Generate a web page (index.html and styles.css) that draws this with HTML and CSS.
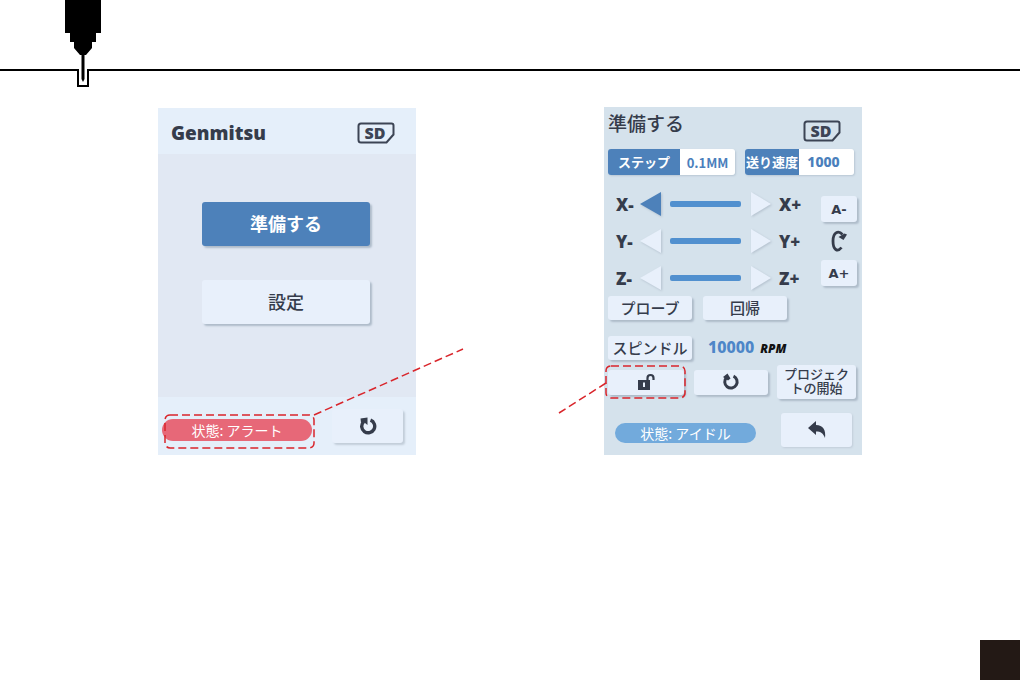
FILE: index.html
```html
<!DOCTYPE html>
<html lang="ja">
<head>
<meta charset="utf-8">
<title>Genmitsu</title>
<link rel="stylesheet" href="styles.css">
</head>
<body>
<header class="banner">
  <span class="rule rule-start"></span>
  <svg class="tool" viewBox="0 0 36 90" aria-hidden="true">
    <path d="M0 0H36V33H31V42H27V48L21 55H15L9 48V42H5V33H0Z"/>
    <path d="M16.500 54H19.500V79L18 82L16.500 79Z"/>
    <path d="M0 70H13V86H23V70H36" fill="none" stroke="#000" stroke-width="2"/>
  </svg>
  <span class="rule"></span>
</header>

<main class="screens">
  <section class="panel home">
    <div class="home-head">
      <h1 class="brand">Genmitsu</h1>
      <svg class="sd" viewBox="0 0 38 22" role="img" aria-label="SD">
        <path d="M4 1.500H34.500Q36.500 1.500 36.500 3.500V12.500L29.500 20.500H4Q1.500 20.500 1.500 18V4Q1.500 1.500 4 1.500Z" fill="none" stroke="currentColor" stroke-width="2"/>
        <text x="18" y="17" text-anchor="middle" class="sd-text">SD</text>
      </svg>
    </div>
    <div class="home-body">
      <button class="btn big primary">準備する</button>
      <button class="btn big">設定</button>
    </div>
    <div class="home-foot">
      <div class="callout">
        <span class="status alert">状態: アラート</span>
        <svg class="mark mark-alert" viewBox="0 0 150 34" aria-hidden="true">
          <rect x="0" y="0" width="149" height="33" rx="5"/>
          <path d="M149 0L298 -66"/>
        </svg>
      </div>
      <button class="btn tile" aria-label="リロード">
        <svg class="icon" viewBox="0 0 18 18" aria-hidden="true">
          <path d="M11.500 3.200A6.500 6.500 0 1 1 4.500 4.800" fill="none" stroke="currentColor" stroke-width="3.400"/>
          <path d="M1.500 1.500L8.500 .5V8L6 6L2 5.500Z" fill="currentColor"/>
        </svg>
      </button>
    </div>
  </section>

  <section class="panel control">
    <div class="control-head">
      <h2 class="title">準備する</h2>
      <svg class="sd" viewBox="0 0 38 22" role="img" aria-label="SD">
        <path d="M4 1.500H34.500Q36.500 1.500 36.500 3.500V12.500L29.500 20.500H4Q1.500 20.500 1.500 18V4Q1.500 1.500 4 1.500Z" fill="none" stroke="currentColor" stroke-width="2"/>
        <text x="18" y="17" text-anchor="middle" class="sd-text">SD</text>
      </svg>
    </div>
    <div class="fields">
      <div class="field step"><label for="step">ステップ</label><input id="step" value="0.1MM"></div>
      <div class="field feed"><label for="feed">送り速度</label><input id="feed" value="1000"></div>
    </div>
    <div class="jog">
      <div class="axes">
        <div class="axis">
          <span>X-</span>
          <button class="arrow active" aria-label="X-"><svg viewBox="0 0 22 26"><path d="M0 13L21 1V25Z"/></svg></button>
          <i class="bar"></i>
          <button class="arrow" aria-label="X+"><svg viewBox="0 0 22 26"><path d="M1 1L21 13L1 25Z"/></svg></button>
          <span>X+</span>
        </div>
        <div class="axis">
          <span>Y-</span>
          <button class="arrow" aria-label="Y-"><svg viewBox="0 0 22 26"><path d="M0 13L21 1V25Z"/></svg></button>
          <i class="bar"></i>
          <button class="arrow" aria-label="Y+"><svg viewBox="0 0 22 26"><path d="M1 1L21 13L1 25Z"/></svg></button>
          <span>Y+</span>
        </div>
        <div class="axis">
          <span>Z-</span>
          <button class="arrow" aria-label="Z-"><svg viewBox="0 0 22 26"><path d="M0 13L21 1V25Z"/></svg></button>
          <i class="bar"></i>
          <button class="arrow" aria-label="Z+"><svg viewBox="0 0 22 26"><path d="M1 1L21 13L1 25Z"/></svg></button>
          <span>Z+</span>
        </div>
      </div>
      <div class="rotary">
        <button class="btn small">A-</button>
        <svg class="turn" viewBox="0 0 18 22" aria-hidden="true">
          <path d="M12.500 4.500C8 -.5 3 3 3 11C3 20 7.500 22.500 11.500 17.500" fill="none" stroke="currentColor" stroke-width="2.800"/>
          <path d="M8.500 7L14.500 3.500L17 4.500L13.500 10Z" fill="currentColor"/>
        </svg>
        <button class="btn small">A+</button>
      </div>
    </div>
    <div class="row">
      <button class="btn mid">プローブ</button>
      <button class="btn mid">回帰</button>
    </div>
    <div class="row spindle">
      <button class="btn mid">スピンドル</button>
      <p class="speed"><output>10000</output> <span>RPM</span></p>
    </div>
    <div class="actions">
      <div class="callout">
        <button class="btn lock" aria-label="ロック解除">
          <svg class="icon" viewBox="0 0 18 18" aria-hidden="true">
            <path d="M1 7H13V17H1Z" fill="currentColor"/>
            <path d="M10.500 8V5Q10.500 2 13.500 2T16.500 5V7" fill="none" stroke="currentColor" stroke-width="2.200"/>
            <path d="M6 9.500H8V14H6Z" fill="#e7effb"/>
          </svg>
        </button>
        <svg class="mark mark-lock" viewBox="0 0 80 34" aria-hidden="true">
          <rect x="0" y="0" width="79" height="32" rx="5"/>
          <path d="M0 17L-47 47"/>
        </svg>
      </div>
      <button class="btn again" aria-label="リロード">
        <svg class="icon" viewBox="0 0 18 18" aria-hidden="true">
          <path d="M11.500 3.200A6.200 6.200 0 1 1 4.500 4.500" fill="none" stroke="currentColor" stroke-width="3"/>
          <path d="M1 4L5.500 .5L8.500 5.500L6 7.500Z" fill="currentColor"/>
        </svg>
      </button>
      <button class="btn project">プロジェク<br>トの開始</button>
    </div>
    <div class="control-foot">
      <span class="status idle">状態: アイドル</span>
      <button class="btn tile" aria-label="戻る">
        <svg class="icon back" viewBox="0 0 20 18" aria-hidden="true"><path d="M1 7L9 0V4C16 4 19 9 18 17C16 12 14 10.500 9 10.500V14Z" fill="currentColor"/></svg>
      </button>
    </div>
  </section>
</main>
<footer class="page-foot"><span class="page-tab"></span></footer>
</body>
</html>
```
FILE: styles.css
```css
* { box-sizing: border-box; }
body {
  margin: 0;
  min-height: 100vh;
  display: flex;
  flex-direction: column;
  background: #fff;
  color: #353c4b;
  font-family: "Noto Sans CJK JP", sans-serif;
}
h1, h2, p { margin: 0; }
button { border: 0; padding: 0; font: inherit; color: inherit; }

.banner { display: flex; height: 90px; }
.rule { flex: 1; height: 71px; border-bottom: 2px solid #000; }
.rule-start { flex: none; width: 65px; }
.tool { width: 36px; height: 90px; }

.screens {
  flex: 1;
  display: flex;
  justify-content: center;
  align-items: flex-start;
  gap: 188px;
  padding-top: 17px;
}
.panel { width: 258px; }
.sd { width: 38px; height: 22px; color: #3c4454; }
.sd-text { font: 800 16px "Open Sans", sans-serif; fill: currentColor; }

.btn {
  display: flex;
  align-items: center;
  justify-content: center;
  border-radius: 3px;
  background: #e8f0fb;
  box-shadow: 2px 2px 2px #aebbc9;
  font-weight: 500;
}
.icon { width: 18px; height: 18px; }
.tile { width: 71px; height: 34px; }
.status {
  display: flex;
  align-items: center;
  justify-content: center;
  border-radius: 11px;
  color: #fff;
  font-size: 14px;
  line-height: 20px;
}

.home { margin-top: 1px; background: #e1e8f3; }
.home-head {
  display: flex;
  align-items: center;
  justify-content: space-between;
  height: 46px;
  padding: 4px 21px 0 13px;
  background: #e5effa;
}
.brand { font: 800 19px/24px "Open Sans", sans-serif; }
.home-body {
  display: flex;
  flex-direction: column;
  align-items: center;
  gap: 34px;
  height: 243px;
  padding: 48px 2px 0 0;
}
.big { width: 168px; height: 44px; padding-bottom: 3px; font-size: 18px; }
.primary { background: #4d81ba; color: #fff; font-weight: 700; }
.home-foot {
  display: flex;
  align-items: center;
  justify-content: space-between;
  height: 58px;
  padding: 0 13px 0 4px;
  background: #e5effa;
}
.home-foot .tile { box-shadow: 2px 2px 2px #c2cdd9; }
.alert { width: 150px; height: 22px; margin-top: 8px; background: #e76878; }

.callout { position: relative; }
.mark {
  position: absolute;
  overflow: visible;
  pointer-events: none;
  fill: none;
  stroke: #d9252b;
  stroke-width: 1.5;
  stroke-dasharray: 8 4;
}
.mark-alert { left: 3px; top: 4px; width: 150px; height: 34px; }
.mark-lock { left: -2px; top: -4px; width: 80px; height: 34px; }

.control { padding: 0 4px 8px; background: #d5e2ec; }
.control-head { display: flex; justify-content: space-between; height: 42px; padding-right: 17px; }
.control-head .sd { margin-top: 13px; }
.title { font-size: 19px; font-weight: 500; line-height: 32px; }

.fields { display: flex; gap: 10px; }
.field { display: flex; height: 26px; border-radius: 3px; box-shadow: 1px 1px 2px #b9c7d4; }
.field label {
  display: flex;
  align-items: center;
  justify-content: center;
  padding-bottom: 2px;
  border-radius: 3px 0 0 3px;
  background: #4d81ba;
  color: #fff;
  font-size: 13px;
  font-weight: 700;
}
.field input {
  width: 55px;
  border: 0;
  border-radius: 0 3px 3px 0;
  padding: 0;
  background: #fff;
  color: #4b7fbc;
  text-align: center;
  font: 700 13px "Noto Sans CJK JP", sans-serif;
}
.step label { width: 72px; }
.feed label { width: 54px; }
.feed input { padding: 0 6px 2px 0; font: 800 14px "Noto Sans", sans-serif; }

.jog { display: flex; align-items: center; justify-content: space-between; padding-top: 11px; }
.axes { display: grid; grid-template-rows: repeat(3, 36px); gap: 1px; padding-left: 8px; }
.axis {
  display: grid;
  grid-template-columns: 24px 30px 80px 29px 24px;
  align-items: center;
  font: 800 17px "Open Sans", sans-serif;
}
.arrow {
  width: 22px;
  height: 26px;
  background: none;
  color: #e8f0fb;
  filter: drop-shadow(1px 1px 1px #b4c1ce);
}
.arrow svg { display: block; width: 22px; height: 26px; fill: currentColor; }
.active { color: #4d81ba; }
.bar { width: 71px; height: 6px; border-radius: 2px; background: #5190cf; }
.rotary {
  display: flex;
  flex-direction: column;
  align-items: center;
  justify-content: space-between;
  height: 90px;
  padding-right: 1px;
}
.small { width: 36px; height: 26px; font: 700 13px "DejaVu Sans", sans-serif; }
.turn { width: 18px; height: 22px; }

.row { display: flex; gap: 11px; }
.mid { width: 84px; height: 24px; padding-bottom: 2px; font-size: 15px; }
.spindle { align-items: center; gap: 16px; margin: 15px 0 3px; }
.speed { display: flex; align-items: baseline; gap: 6px; line-height: 24px; }
.speed output { color: #4d86c8; font: 800 16px/24px "Noto Sans", sans-serif; }
.speed span { color: #111; font: italic 800 12px/24px "Open Sans", sans-serif; }

.actions { display: flex; align-items: center; justify-content: space-between; height: 36px; padding-right: 2px; }
.lock, .again { height: 25px; }
.lock { width: 76px; }
.again { width: 74px; }
.project { width: 79px; height: 34px; padding-bottom: 2px; font-size: 13px; line-height: 14px; }
.control-foot {
  display: flex;
  align-items: center;
  justify-content: space-between;
  margin-top: 13px;
  padding: 0 6px 0 7px;
}
.control-foot .btn { box-shadow: 1px 1px 2px #c2cdd9; }
.idle { width: 141px; height: 20px; margin-top: 6px; background: #72aadc; }
.back { width: 20px; }

.page-foot { display: flex; justify-content: flex-end; }
.page-tab { width: 40px; height: 40px; background: #231915; }
```
